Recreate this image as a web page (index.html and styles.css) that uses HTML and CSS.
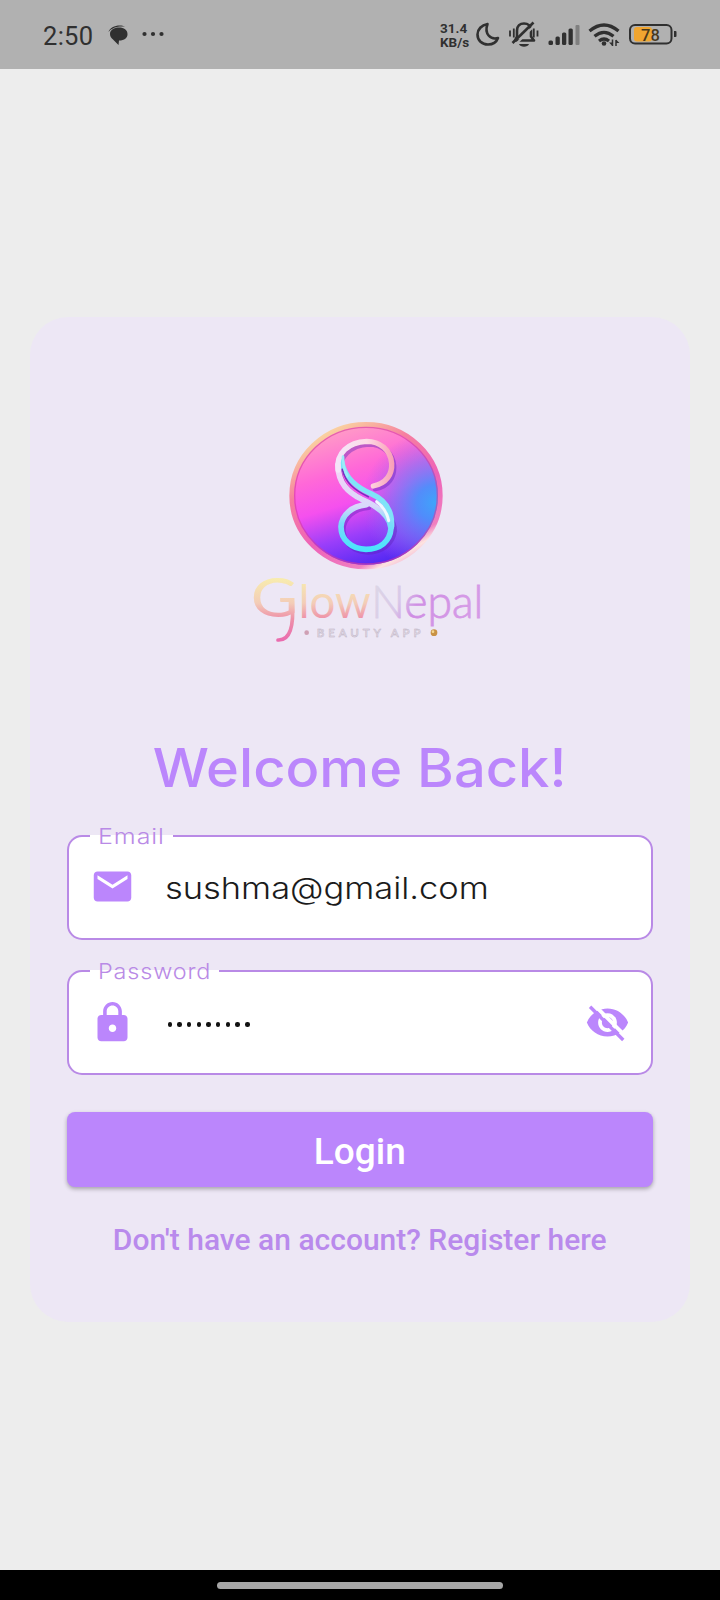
FILE: index.html
```html
<!DOCTYPE html>
<html lang="en">
<head>
<meta charset="utf-8">
<title>GlowNepal – Login</title>
<link rel="stylesheet" href="styles.css">
</head>
<body>
<div class="screen">
  <header class="status">
    <span class="clock">2:50</span>
    <svg class="chat" width="20" height="20" viewBox="0 0 20 20"><path d="M.5 7C1.500 1.500 12-1.500 17 1.800 11 .8 4 2.500.5 7z"/><path d="M11 2.500c5 0 8.500 2.500 8.500 6.500s-3 6.500-8.500 6.500L10.500 20 5 14.500C3 13 2 11 2 9c0-4 4-6.500 9-6.500z"/></svg>
    <svg class="dots" width="22" height="6" viewBox="0 0 22 6"><circle cx="2.500" cy="3" r="2.100"/><circle cx="11" cy="3" r="2.100"/><circle cx="19.500" cy="3" r="2.100"/></svg>
    <span class="rate"><span>31.4</span><span>KB/s</span></span>
    <svg class="sys" width="240" height="40" viewBox="475 15 240 40">
      <path d="M487.500 24c-6 1-10 5.500-10 10.500 0 6 4.500 10 10.500 10 4.500 0 8.500-2.500 10-6.500-7.500 2-14-4-10.500-14z" fill="none" stroke="#303030" stroke-width="2.600" stroke-linejoin="round"/>
      <g fill="none" stroke="#303030" stroke-width="2.600">
        <path d="M515 40.500h19l-3-4v-6c0-4.500-3-7-7-7s-7 2.500-7 7v6z" stroke-linejoin="round"/>
        <path d="M535.500 24.500L515.500 44.500" stroke="#b1b1b1" stroke-width="2"/>
        <path d="M533.500 22.500L512.500 43"/>
        <path d="M510 30.500v6M513.800 28.500v9M537.500 30.500v6M533.800 28.500v9" stroke-width="1.800"/>
      </g>
      <path d="M519 44h10c-1 3.600-9 3.600-10 0z"/>
      <g><rect x="548.500" y="40.500" width="4.500" height="4.500" rx="1.500"/><rect x="555.500" y="36.500" width="4.300" height="8.500" rx="1.500"/><rect x="562" y="32.500" width="4.300" height="12.500" rx="1.500"/><rect x="568.500" y="28.500" width="4.300" height="16.500" rx="1.500"/><rect x="575.500" y="25" width="4" height="20" rx="1" fill="#808080"/></g>
      <g fill="none" stroke="#303030" stroke-width="3.200"><path d="M589.500 31q14.500-12 29 0M594.500 36.300q9.500-8 19 0M599 41q5-4 10 0"/></g>
      <circle cx="604" cy="43.500" r="2.300"/>
      <path d="M612.500 39.500v6.500M616 40v6" stroke="#303030" stroke-width="1.500"/><path d="M612.500 46l-3.500-3.500h3.500zM616 39.500l3.500 3.500H616z"/>
      <rect x="634" y="27" width="18" height="14.500" rx="3" fill="#f0a530"/>
      <rect x="630" y="25" width="41.500" height="18.500" rx="5" fill="none" stroke="#303030" stroke-width="2"/>
      <path d="M674 31h1.500q1 0 1 1v4q0 1-1 1h-1.500z"/>
      <text x="650.500" y="40.800" class="batt" text-anchor="middle">78</text>
    </svg>
  </header>
  <main class="page">
    <section class="card">
      <svg class="logo" width="250" height="260" viewBox="0 0 750 780" role="img" aria-label="GlowNepal Beauty App">
        <defs>
          <linearGradient id="disc" x1=".25" y1=".05" x2=".55" y2="1"><stop offset="0" stop-color="#ff9cc6"/><stop offset=".3" stop-color="#ff68d8"/><stop offset=".52" stop-color="#f550ee"/><stop offset=".75" stop-color="#9a3efa"/><stop offset="1" stop-color="#5028f2"/></linearGradient>
          <radialGradient id="blue" cx=".97" cy=".55" r=".5"><stop offset="0" stop-color="#3fa4fa"/><stop offset=".25" stop-color="#4c90fb" stop-opacity=".95"/><stop offset=".6" stop-color="#7a78f4" stop-opacity=".6"/><stop offset="1" stop-color="#a060f0" stop-opacity="0"/></radialGradient>
          <linearGradient id="rim" x1=".2" y1="0" x2=".8" y2="1"><stop offset="0" stop-color="#fbe5a0"/><stop offset=".3" stop-color="#f67fa0"/><stop offset=".6" stop-color="#ee62b8"/><stop offset=".85" stop-color="#f07fc0"/><stop offset=".91" stop-color="#fde4e0"/><stop offset="1" stop-color="#f0a0d0"/></linearGradient>
          <linearGradient id="fig" gradientUnits="userSpaceOnUse" x1="0" y1="115" x2="0" y2="455"><stop offset="0" stop-color="#fff0f4"/><stop offset=".3" stop-color="#f2d4f8"/><stop offset=".6" stop-color="#d8d8fb"/><stop offset=".75" stop-color="#7adcfa"/><stop offset="1" stop-color="#46e4fc"/></linearGradient>
          <linearGradient id="loop" gradientUnits="userSpaceOnUse" x1="300" y1="0" x2="460" y2="0"><stop offset="0" stop-color="#f4e4f8"/><stop offset=".5" stop-color="#fddce6"/><stop offset="1" stop-color="#fa9fb8"/></linearGradient>
          <linearGradient id="warm" gradientUnits="userSpaceOnUse" x1="0" y1="535" x2="0" y2="720"><stop offset="0" stop-color="#f8ecae"/><stop offset=".4" stop-color="#f3cdb8"/><stop offset=".65" stop-color="#ee92a8"/><stop offset="1" stop-color="#ea6cae"/></linearGradient>
          <linearGradient id="cool" gradientUnits="userSpaceOnUse" x1="400" y1="580" x2="640" y2="690"><stop offset="0" stop-color="#dcd5e6"/><stop offset=".3" stop-color="#d9c8e8"/><stop offset=".5" stop-color="#cf8ee4"/><stop offset="1" stop-color="#d59ae6"/></linearGradient>
        </defs>
        <ellipse cx="378" cy="287" rx="222" ry="214" fill="url(#disc)"/>
        <ellipse cx="378" cy="287" rx="222" ry="214" fill="url(#blue)"/>
        <ellipse cx="378" cy="287" rx="223" ry="214" fill="none" stroke="url(#rim)" stroke-width="14"/>
        <ellipse cx="378" cy="287" rx="214" ry="205" fill="none" stroke="#d63a9c" stroke-opacity=".6" stroke-width="4"/>
        <g fill="none" stroke-linecap="round">
          <g stroke="#5a20b8" stroke-opacity=".4" stroke-width="16" transform="translate(6 8)"><path d="M400 258C440 250 457 222 455 190C452 150 420 124 380 124C325 126 288 165 293 210C306 275 355 285 405 315C440 336 457 355 457 385C450 425 420 448 378 448C335 447 303 420 303 380C305 345 335 318 380 314"/></g>
          <path d="M305 185C315 235 350 262 395 282C440 302 457 335 455 380" stroke="#7fe4f8" stroke-width="16"/>
          <path d="M294 195C294 250 325 278 365 298C420 322 450 350 453 385C450 425 420 448 378 448C335 447 303 420 303 380C305 345 335 318 380 314" stroke="url(#fig)" stroke-width="17"/>
          <path d="M307 208C317 248 342 270 385 290" stroke="#7c2cc0" stroke-width="5"/>
          <path d="M400 258C440 250 457 222 455 190C452 150 420 124 380 124C325 126 288 160 294 210" stroke="url(#loop)" stroke-width="16"/>
          <path d="M309 170C309 190 312 210 322 228" stroke="#9cecf8" stroke-width="8"/>
          <path d="M410 305Q438 325 446 362" stroke="#effaff" stroke-width="9"/>
        </g>
        <g class="word">
          <text x="176" y="655" font-size="138" fill="url(#warm)" textLength="216" lengthAdjust="spacingAndGlyphs">low</text>
          <text x="32" y="652" font-size="162" fill="url(#warm)" textLength="142" lengthAdjust="spacingAndGlyphs">G</text>
          <text x="394" y="655" font-size="134" class="thin" fill="url(#cool)" stroke="url(#cool)" stroke-width="2.500" textLength="336" lengthAdjust="spacingAndGlyphs">Nepal</text>
        </g>
        <path d="M157 604C162 680 150 722 114 720" fill="none" stroke="url(#warm)" stroke-width="11" stroke-linecap="round"/>
        <text x="230" y="710" class="tag" textLength="312">BEAUTY APP</text>
        <circle cx="200" cy="698" r="7" fill="#cfa0b4"/><circle cx="582" cy="698" r="10" fill="#c99245"/><circle cx="579" cy="695" r="4" fill="#f4d890"/>
      </svg>
      <h1 class="title"><span>Welcome Back!</span></h1>
      <form class="form">
        <div class="field">
          <label class="label"><span class="lt-email">Email</span></label>
          <svg class="icon mail" width="45" height="45" viewBox="0 0 24 24"><path d="M20 4H4c-1.100 0-1.990.9-1.990 2L2 18c0 1.100.9 2 2 2h16c1.100 0 2-.9 2-2V6c0-1.100-.9-2-2-2zm0 4l-8 5-8-5V6l8 5 8-5v2z"/></svg>
          <span class="value"><span>sushma@gmail.com</span></span>
        </div>
        <div class="field">
          <label class="label"><span class="lt-pass">Password</span></label>
          <svg class="icon" width="45" height="45" viewBox="0 0 24 24"><path d="M18 8h-1V6c0-2.760-2.240-5-5-5S7 3.240 7 6v2H6c-1.100 0-2 .9-2 2v10c0 1.100.9 2 2 2h12c1.100 0 2-.9 2-2V10c0-1.100-.9-2-2-2zm-6 9c-1.100 0-2-.9-2-2s.9-2 2-2 2 .9 2 2-.9 2-2 2zm3.100-9H8.900V6c0-1.710 1.390-3.100 3.100-3.100 1.710 0 3.100 1.390 3.100 3.100v2z"/></svg>
          <span class="mask"><i></i><i></i><i></i><i></i><i></i><i></i><i></i><i></i><i></i></span>
          <svg class="icon eye" width="45" height="45" viewBox="0 0 24 24"><path fill-rule="evenodd" d="M12 4.500C7 4.500 2.730 7.610 1 12c1.730 4.390 6 7.500 11 7.500s9.270-3.110 11-7.500c-1.730-4.390-6-7.500-11-7.500zM12 17c-2.760 0-5-2.240-5-5s2.240-5 5-5 5 2.240 5 5-2.240 5-5 5zm0-8c-1.660 0-3 1.340-3 3s1.340 3 3 3 3-1.340 3-3-1.340-3-3-3z"/><path d="M4.500 2.200L22 19.700" stroke="#fff" stroke-width="2"/><path d="M2.700 3.600L20.400 21.300" stroke="#bb86fc" stroke-width="1.800"/></svg>
        </div>
        <button class="login" type="button">Login</button>
      </form>
      <p class="register"><span>Don't have an account? Register here</span></p>
    </section>
  </main>
  <footer class="nav"><div class="handle"></div></footer>
</div>
</body>
</html>
```
FILE: styles.css
```css
* { box-sizing: border-box; }
body { margin: 0; font-family: Roboto, sans-serif; }
.screen { width: 720px; height: 1600px; display: flex; flex-direction: column; background: #ededed; overflow: hidden; }
.status { height: 69px; background: #b1b1b1; display: flex; align-items: flex-start; color: #303030; fill: #303030; }
.clock { margin: 21px 0 0 43px; width: 52px; font-size: 25.500px; line-height: 30px; letter-spacing: .3px; white-space: nowrap; }
.chat { margin: 25px 0 0 13px; }
.dots { margin: 31px 0 0 14px; }
.rate { margin: 22px 0 0 276px; width: 35px; display: flex; flex-direction: column; font-size: 13.500px; font-weight: 700; line-height: 13.500px; white-space: nowrap; }
.sys { margin-top: 15px; }
.batt { font: 500 16.500px Roboto, sans-serif; fill: #4a3a1c; }
.page { flex: 1; padding: 248px 30px 0; }
.card { height: 1005px; border-radius: 38px; background: #ede7f5; padding: 83px 37.500px 0 37px; display: flex; flex-direction: column; align-items: stretch; }
.logo { margin-left: 173px; display: block; }
.word { font-family: Lato, sans-serif; font-weight: 400; }
.thin { font-weight: 300; }
.tag { font: 600 35px Lato, sans-serif; fill: #e2dae6; stroke: #b9aec0; stroke-width: 1.200; }
.title { margin: 77px 0 0; height: 62px; text-align: center; font: 500 53px/62px Inter, sans-serif; color: #bb86fc; white-space: nowrap; }
.title span { display: inline-block; transform: scaleX(1.058); }
.form { margin-top: 36px; display: flex; flex-direction: column; gap: 30px; }
.field { position: relative; height: 105px; border: 2px solid #b98ae6; border-radius: 15px; background: #fff; display: flex; align-items: center; padding-left: 21px; }
.label { position: absolute; left: 21px; top: -15px; height: 28px; padding: 0 9px 0 8px; font: 300 22px/28px Inter, sans-serif; color: #b98ae6; background: linear-gradient(#fff, #fff) 0 13px / 100% 2px no-repeat; letter-spacing: .8px; }
.label span { display: block; white-space: nowrap; transform-origin: 0 50%; }
.lt-email { width: 66px; transform: scaleX(1.140); }
.lt-pass { width: 112px; transform: scaleX(1.065); }
.icon { fill: #bb86fc; flex: none; }
.mail { margin-top: -2px; }
.value { margin-left: 29.500px; font: 300 30px/40px Inter, sans-serif; color: #1b1b1b; }
.value span { display: inline-block; transform-origin: 0 50%; transform: scaleX(1.148); }
.mask { margin: 4px auto 0 32.500px; display: flex; gap: 5.200px; }
.mask i { width: 4.500px; height: 4.500px; border-radius: 50%; background: #111; }
.eye { margin-right: 20.500px; }
.login { margin-top: 7px; height: 75px; border: 0; border-radius: 8px; background: #bb86fc; box-shadow: 0 2px 4px rgba(0,0,0,.3); color: #fff; font: 500 37px/75px Roboto, sans-serif; padding: 2px 0 0; }
.register { margin: 34px 0 0; text-align: center; font: 500 30px/38px Roboto, sans-serif; color: #b98aec; white-space: nowrap; }
.nav { height: 30px; background: #000; padding-top: 12px; }
.handle { width: 286px; height: 7px; border-radius: 4px; margin: 0 auto; background: #a6a6a6; }
```
